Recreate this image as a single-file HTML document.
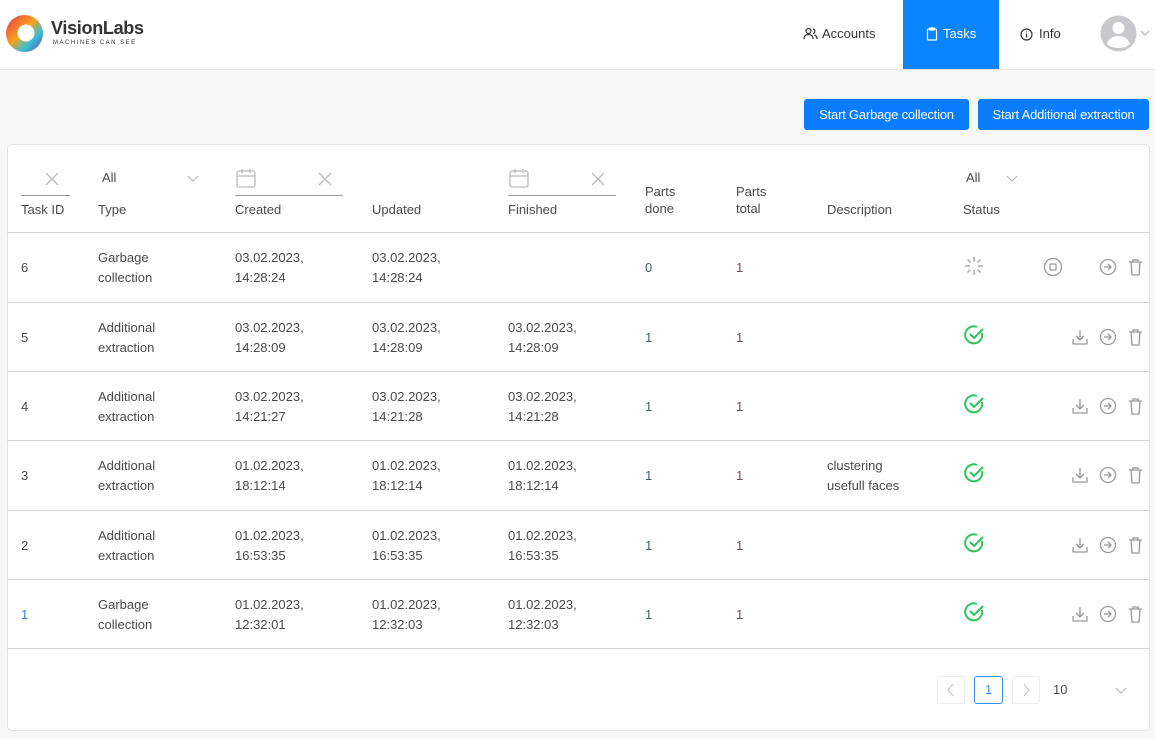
<!DOCTYPE html>
<html><head><meta charset="utf-8"><style>
*{box-sizing:border-box;margin:0;padding:0}
body{width:1155px;height:739px;background:#f7f7f7;font-family:"Liberation Sans",sans-serif;color:#444;position:relative;overflow:hidden;font-size:13px}
.hdr{position:absolute;left:0;top:0;width:1155px;height:70px;background:#fff;border-bottom:1px solid #e4e4e4}
.a{position:absolute}
.btn{position:absolute;top:99px;height:31px;background:#0a7cff;color:#fff;border-radius:3px;font-size:13px;line-height:31px;text-align:center;letter-spacing:-0.2px}
.card{position:absolute;left:7px;top:144px;width:1143px;height:587px;background:#fff;border:1px solid #e2e2e2;border-radius:5px}
.row{position:absolute;left:7px;width:1142px;border-top:1px solid #d4d4d4}
.t{position:absolute;line-height:20px;color:#4a4a4a}
.pd{color:#3f5f60}.pt{color:#7a4458}
</style></head><body>
<div class="hdr">
 <svg class="a" style="left:6px;top:15px" width="37" height="37" viewBox="0 0 37 37"><defs><linearGradient id="g" x1="0" y1="0" x2="1" y2="1"><stop offset="0" stop-color="#e8324a"/><stop offset=".45" stop-color="#f7a21b"/><stop offset=".7" stop-color="#35c0d8"/><stop offset="1" stop-color="#7b3fa0"/></linearGradient></defs><circle cx="18.5" cy="18.5" r="18.5" fill="url(#g)"/><circle cx="20" cy="18" r="8.5" fill="#fff"/></svg>
 <div class="a" style="left:51px;top:18px;font-size:18px;font-weight:bold;color:#333;letter-spacing:-0.3px">VisionLabs</div>
 <div class="a" style="left:53px;top:40px;font-size:6px;letter-spacing:1.5px;color:#333">MACHINES CAN SEE</div>
 <svg class="a" style="left:803px;top:27px" width="15" height="14" viewBox="0 0 15 14" fill="none" stroke="#333" stroke-width="1.2"><circle cx="5.5" cy="4" r="2.5"/><path d="M1 12c0-3 2-4.5 4.5-4.5S10 9 10 12M10 2a2.3 2.3 0 010 4.5M11.5 8c1.5.5 2.5 2 2.5 4"/></svg>
 <div class="a" style="left:822px;top:26px;font-size:13px;color:#333">Accounts</div>
 <div class="a" style="left:903px;top:0;width:96px;height:69px;background:#0a84ff"></div>
 <svg class="a" style="left:926px;top:27px" width="12" height="14" viewBox="0 0 12 14" fill="none" stroke="#fff" stroke-width="1.2"><rect x="1.5" y="2" width="9" height="11" rx="1"/><rect x="3.5" y="1" width="5" height="2" rx=".5"/></svg>
 <div class="a" style="left:943px;top:26px;font-size:13px;color:#fff">Tasks</div>
 <svg class="a" style="left:1020px;top:28px" width="13" height="13" viewBox="0 0 13 13" fill="none" stroke="#333" stroke-width="1.2"><circle cx="6.5" cy="6.5" r="5.5"/><path d="M6.5 5.5v4M6.5 3.5v.8"/></svg>
 <div class="a" style="left:1039px;top:26px;font-size:13px;color:#333">Info</div>
 <svg class="a" style="left:1100px;top:15px" width="37" height="37" viewBox="0 0 37 37"><circle cx="18.5" cy="18.5" r="18" fill="#c8c8cc"/><circle cx="18.5" cy="13" r="6" fill="#fff"/><path d="M7 29c2-6 6-8 11.5-8S28 23 30 29c-3 3-7 4-11.5 4S10 32 7 29z" fill="#fff"/></svg>
 <svg class="a" style="left:1140px;top:30px" width="10" height="6" viewBox="0 0 10 6" fill="none" stroke="#aaa"><path d="M1 1l4 4 4-4"/></svg>
</div>
<div class="btn" style="left:804px;width:165px">Start Garbage collection</div>
<div class="btn" style="left:978px;width:171px">Start Additional extraction</div>
<div class="card"></div>
<svg class="a" style="left:45px;top:172px" width="14" height="14" stroke="#bbb" stroke-width="1.3"><path d="M1 1l12 12M13 1L1 13"/></svg>
<div class="a" style="left:21px;top:195px;width:49px;border-top:1px solid #999"></div>
<div class="t" style="left:102px;top:168px">All</div>
<svg class="a" style="left:187px;top:175px" width="12" height="7" fill="none" stroke="#bbb" stroke-width="1.2"><path d="M1 1l5 5 5-5"/></svg>
<svg class="a" style="left:236px;top:168px" width="20" height="20" fill="none" stroke="#bbb" stroke-width="1.3"><rect x="1" y="3" width="18" height="16" rx="2"/><path d="M1 8h18M6 1v4M14 1v4"/></svg>
<svg class="a" style="left:318px;top:172px" width="14" height="14" stroke="#bbb" stroke-width="1.3"><path d="M1 1l12 12M13 1L1 13"/></svg>
<div class="a" style="left:235px;top:195px;width:108px;border-top:1px solid #999"></div>
<svg class="a" style="left:509px;top:168px" width="20" height="20" fill="none" stroke="#bbb" stroke-width="1.3"><rect x="1" y="3" width="18" height="16" rx="2"/><path d="M1 8h18M6 1v4M14 1v4"/></svg>
<svg class="a" style="left:591px;top:172px" width="14" height="14" stroke="#bbb" stroke-width="1.3"><path d="M1 1l12 12M13 1L1 13"/></svg>
<div class="a" style="left:508px;top:195px;width:108px;border-top:1px solid #999"></div>
<div class="t" style="left:966px;top:168px">All</div>
<svg class="a" style="left:1006px;top:175px" width="12" height="7" fill="none" stroke="#bbb" stroke-width="1.2"><path d="M1 1l5 5 5-5"/></svg>
<div class="t" style="left:21px;top:200px">Task ID</div>
<div class="t" style="left:98px;top:200px">Type</div>
<div class="t" style="left:235px;top:200px">Created</div>
<div class="t" style="left:372px;top:200px">Updated</div>
<div class="t" style="left:508px;top:200px">Finished</div>
<div class="t" style="left:645px;top:183px;line-height:17px">Parts<br>done</div>
<div class="t" style="left:736px;top:183px;line-height:17px">Parts<br>total</div>
<div class="t" style="left:827px;top:200px">Description</div>
<div class="t" style="left:963px;top:200px">Status</div>
<div id="rows"></div>
<script>
var d=[["6","Garbage<br>collection","03.02.2023,<br>14:28:24","03.02.2023,<br>14:28:24","","0","1",""],
["5","Additional<br>extraction","03.02.2023,<br>14:28:09","03.02.2023,<br>14:28:09","03.02.2023,<br>14:28:09","1","1",""],
["4","Additional<br>extraction","03.02.2023,<br>14:21:27","03.02.2023,<br>14:21:28","03.02.2023,<br>14:21:28","1","1",""],
["3","Additional<br>extraction","01.02.2023,<br>18:12:14","01.02.2023,<br>18:12:14","01.02.2023,<br>18:12:14","1","1","clustering<br>usefull faces"],
["2","Additional<br>extraction","01.02.2023,<br>16:53:35","01.02.2023,<br>16:53:35","01.02.2023,<br>16:53:35","1","1",""],
["1","Garbage<br>collection","01.02.2023,<br>12:32:01","01.02.2023,<br>12:32:03","01.02.2023,<br>12:32:03","1","1",""]];
var tops=[232,302,371,440,510,579],h="";
var arrow='<svg class="a" style="left:1099px;top:TOPpx" width="18" height="18" fill="none" stroke="#999" stroke-width="1.3"><circle cx="9" cy="9" r="7.5"/><path d="M5 9h7M9 6l3 3-3 3"/></svg>';
var trash='<svg class="a" style="left:1128px;top:TOPpx" width="15" height="18" fill="none" stroke="#999" stroke-width="1.3"><path d="M1 4h13M5 4V2h5v2M3 4l1 13h7l1-13"/></svg>';
var dl='<svg class="a" style="left:1071px;top:TOPpx" width="18" height="18" fill="none" stroke="#999" stroke-width="1.3"><path d="M9 2v10M5 8l4 4 4-4M2 11v5h14v-5"/></svg>';
var ok='<svg class="a" style="left:963px;top:TOPpx" width="22" height="22" fill="none" stroke="#2ac55c" stroke-width="2"><path d="M19 9A8.5 8.5 0 1 1 14 3"/><path d="M7 10l4 4 9-9"/></svg>';
d.forEach(function(r,i){var t=tops[i],c=t+36;
h+='<div class="row" style="top:'+t+'px"></div>';
var ty=c-10,ty2=c-20;
h+='<div class="t" style="left:21px;top:'+ty+'px;'+(i==5?'color:#2f7fd0':'')+'">'+r[0]+'</div>';
[[98,1],[235,2],[372,3],[508,4],[827,7]].forEach(function(p){h+='<div class="t" style="left:'+p[0]+'px;top:'+ty2+'px">'+r[p[1]]+'</div>'});
h+='<div class="t pd" style="left:645px;top:'+ty+'px">'+r[5]+'</div><div class="t pt" style="left:736px;top:'+ty+'px">'+r[6]+'</div>';
if(i==0){h+='<svg class="a" style="left:963px;top:'+(c-13)+'px" width="22" height="22" stroke="#aaa" stroke-width="1.5"><path d="M11 2v5M11 15v5M2 11h5M15 11h5M4.5 4.5l3 3M14.5 14.5l3 3M17.5 4.5l-3 3M7.5 14.5l-3 3"/></svg>';
h+='<svg class="a" style="left:1043px;top:'+(c-11)+'px" width="20" height="20" fill="none" stroke="#999" stroke-width="1.3"><circle cx="10" cy="10" r="8.5"/><rect x="7" y="7" width="6" height="6" rx="1"/></svg>';}
else{h+=ok.replace('TOP',c-14);h+=dl.replace('TOP',c-10);}
h+=arrow.replace('TOP',c-10)+trash.replace('TOP',c-10);
});
h+='<div class="row" style="top:648px"></div>';
document.getElementById('rows').innerHTML=h;
</script>
<div class="a" style="left:937px;top:676px;width:28px;height:28px;border:1px solid #eee;border-radius:3px"></div>
<svg class="a" style="left:946px;top:683px" width="10" height="14" fill="none" stroke="#ccc" stroke-width="1.3"><path d="M7 1L2 7l5 6"/></svg>
<div class="a" style="left:974px;top:676px;width:29px;height:28px;border:1px solid #3b8ff0;border-radius:3px;color:#3b8ff0;text-align:center;line-height:26px;font-size:13px">1</div>
<div class="a" style="left:1012px;top:676px;width:28px;height:28px;border:1px solid #eee;border-radius:3px"></div>
<svg class="a" style="left:1021px;top:683px" width="10" height="14" fill="none" stroke="#ccc" stroke-width="1.3"><path d="M3 1l5 6-5 6"/></svg>
<div class="t" style="left:1053px;top:680px">10</div>
<svg class="a" style="left:1115px;top:687px" width="12" height="7" fill="none" stroke="#bbb" stroke-width="1.2"><path d="M1 1l5 5 5-5"/></svg>
</body></html>
